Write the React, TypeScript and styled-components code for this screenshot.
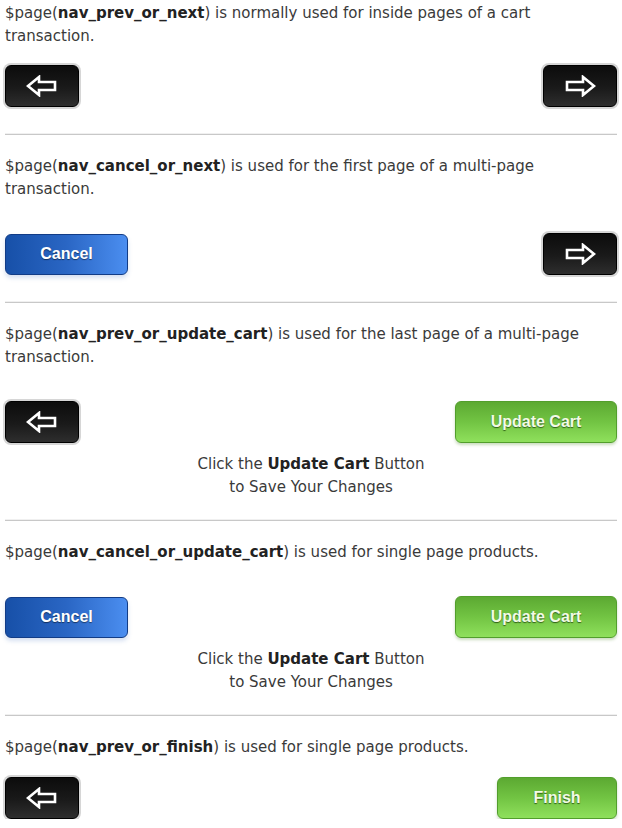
import React from 'react'
import styled, { createGlobalStyle } from 'styled-components'

const GlobalStyle = createGlobalStyle`
  body {
    margin: 0;
    background: #fff;
    font-family: 'DejaVu Sans', 'Liberation Sans', sans-serif;
    color: #333;
  }
`

const Page = styled.div`
  width: 612px;
  padding: 2px 5px 0;
`

const Section = styled.section`
  display: flex;
  flex-direction: column;
`

const Intro = styled.p`
  margin: 0;
  font-size: 15px;
  line-height: 23px;
  color: #3a3a3a;
  b {
    font-weight: 700;
    color: #222;
  }
`

const ButtonRow = styled.div<{ $gap: number }>`
  display: flex;
  justify-content: space-between;
  align-items: center;
  margin-top: ${({ $gap }) => $gap}px;
`

const Divider = styled.hr`
  margin: 0;
  height: 0;
  border: 0;
  border-top: 1px solid #f0f0f0;
  border-bottom: 1px solid #c8c8c8;
`

const BaseButton = styled.button`
  height: 42px;
  border-radius: 6px;
  cursor: pointer;
  display: flex;
  align-items: center;
  justify-content: center;
  font-family: 'Liberation Sans', Arial, sans-serif;
  font-weight: 700;
  font-size: 15px;
  padding: 0;
`

const ArrowButton = styled(BaseButton)`
  width: 74px;
  background: linear-gradient(to bottom, #0c0c0c 0%, #1a1a1a 55%, #2e2e2e 100%);
  border: 1px solid #000;
  box-shadow: 0 0 0 2px #d6d6d6;
`

const CancelButton = styled(BaseButton)`
  width: 123px;
  height: 41px;
  font-size: 16px;
  color: #fff;
  background: linear-gradient(to right, #1750a8 0%, #2a66c4 50%, #4b8ef0 100%);
  border: 1px solid #123c86;
  box-shadow: 0 3px 4px rgba(90, 130, 200, 0.25);
  text-shadow: 0 1px 1px rgba(0, 0, 0, 0.5);
`

const GreenButton = styled(BaseButton)<{ $width: number }>`
  width: ${({ $width }) => $width}px;
  font-size: 16px;
  color: #f2fae6;
  background: linear-gradient(to bottom, #5ca932 0%, #72c443 50%, #8fe05c 100%);
  border: 1px solid #529e2c;
  box-shadow: 0 2px 3px rgba(80, 140, 40, 0.3);
  text-shadow: 0 1px 1px rgba(30, 70, 10, 0.8);
`

const Note = styled.p`
  margin: 10px 0 0;
  text-align: center;
  font-size: 15px;
  line-height: 23px;
  color: #3a3a3a;
  b {
    font-weight: 700;
    color: #222;
  }
`

const Arrow: React.FC<{ dir: 'left' | 'right' }> = ({ dir }) => (
  <svg width="32" height="22" viewBox="0 0 32 22">
    <path
      d="M2 11 L13 2 L13 7 L29 7 L29 15 L13 15 L13 20 Z"
      fill="none"
      stroke="#fff"
      strokeWidth="2.6"
      strokeLinejoin="miter"
      transform={dir === 'right' ? 'translate(32 0) scale(-1 1)' : undefined}
    />
  </svg>
)

const Gap = styled.div<{ $h: number }>`
  height: ${({ $h }) => $h}px;
`

const UpdateNote = () => (
  <Note>
    Click the <b>Update Cart</b> Button
    <br />
    to Save Your Changes
  </Note>
)

export default function App() {
  return (
    <Page>
      <GlobalStyle />
      <Section>
        <Intro>
          $page(<b>nav_prev_or_next</b>) is normally used for inside pages of a cart transaction.
        </Intro>
        <ButtonRow $gap={17}>
          <ArrowButton><Arrow dir="left" /></ArrowButton>
          <ArrowButton><Arrow dir="right" /></ArrowButton>
        </ButtonRow>
        <Gap $h={26} />
      </Section>
      <Divider />
      <Gap $h={20} />
      <Section>
        <Intro>
          $page(<b>nav_cancel_or_next</b>) is used for the first page of a multi-page transaction.
        </Intro>
        <ButtonRow $gap={32}>
          <CancelButton>Cancel</CancelButton>
          <ArrowButton><Arrow dir="right" /></ArrowButton>
        </ButtonRow>
        <Gap $h={26} />
      </Section>
      <Divider />
      <Gap $h={20} />
      <Section>
        <Intro>
          $page(<b>nav_prev_or_update_cart</b>) is used for the last page of a multi-page transaction.
        </Intro>
        <ButtonRow $gap={32}>
          <ArrowButton><Arrow dir="left" /></ArrowButton>
          <GreenButton $width={162}>Update Cart</GreenButton>
        </ButtonRow>
        <UpdateNote />
        <Gap $h={20} />
      </Section>
      <Divider />
      <Gap $h={20} />
      <Section>
        <Intro>
          $page(<b>nav_cancel_or_update_cart</b>) is used for single page products.
        </Intro>
        <ButtonRow $gap={32}>
          <CancelButton>Cancel</CancelButton>
          <GreenButton $width={162}>Update Cart</GreenButton>
        </ButtonRow>
        <UpdateNote />
        <Gap $h={20} />
      </Section>
      <Divider />
      <Gap $h={20} />
      <Section>
        <Intro>
          $page(<b>nav_prev_or_finish</b>) is used for single page products.
        </Intro>
        <ButtonRow $gap={18}>
          <ArrowButton><Arrow dir="left" /></ArrowButton>
          <GreenButton $width={120}>Finish</GreenButton>
        </ButtonRow>
      </Section>
    </Page>
  )
}
